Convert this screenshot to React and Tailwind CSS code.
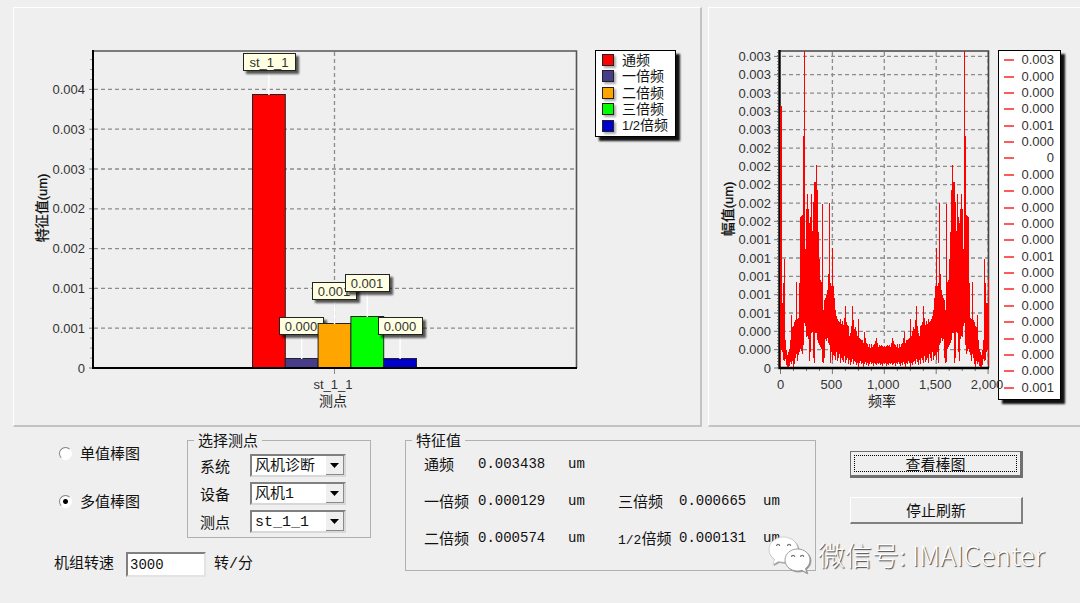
import React, { useState } from "react";

const series = [
  { name: "通频", color: "#ff0000", top: 94, tag: "st_1_1", tagX: 243, tagY: 53, tagW: 52 },
  { name: "一倍频", color: "#483d8b", top: 358, tag: "0.000", tagX: 279, tagY: 317, tagW: 44 },
  { name: "二倍频", color: "#ffa500", top: 323, tag: "0.001", tagX: 312, tagY: 282, tagW: 44 },
  { name: "三倍频", color: "#00ff00", top: 316, tag: "0.001", tagX: 345, tagY: 274, tagW: 44 },
  { name: "1/2倍频", color: "#0000cd", top: 358, tag: "0.000", tagX: 378, tagY: 317, tagW: 44 },
];

const barTicks = ["0", "0.001", "0.001", "0.002", "0.002", "0.003", "0.003", "0.004"];

const spectrumTicks = [
  "0", "0.000", "0.000", "0.001", "0.001", "0.001", "0.001", "0.001", "0.002",
  "0.002", "0.002", "0.002", "0.002", "0.003", "0.003", "0.003", "0.003", "0.003",
];

const spectrumLegend = [
  "0.003", "0.000", "0.000", "0.000", "0.001", "0.000", "0", "0.000", "0.000", "0.000", "0.000",
  "0.000", "0.001", "0.000", "0.000", "0.000", "0.000", "0.000", "0.000", "0.000", "0.001",
];

// First half of the spectrum, one column per pixel; the other half is its mirror
const tops = [
  106, 106, 303, 283, 259, 340, 350, 355, 352, 349, 340, 315, 327, 326, 322, 320, 282, 319, 318, 283,
  217, 216, 215, 136, 51, 249, 209, 194, 209, 223, 217, 194, 231, 202, 182, 182, 165, 190, 232, 259,
  280, 282, 204, 310, 300, 298, 295, 290, 274, 203, 283, 286, 248, 286, 298, 310, 316, 319, 321, 322,
  319, 324, 321, 325, 318, 306, 322, 325, 326, 336, 333, 326, 306, 320, 329, 327, 331, 336, 319, 338,
  339, 340, 340, 343, 332, 338, 343, 344, 347, 344, 348, 344, 347, 345, 344, 341, 338, 343, 347, 345,
  346, 345, 346, 347, 346,
];

const bottoms = [
  366, 350, 352, 360, 361, 359, 365, 367, 367, 366, 362, 364, 361, 367, 364, 358, 354, 361, 355, 352,
  349, 351, 354, 345, 323, 326, 337, 336, 339, 361, 352, 333, 332, 358, 363, 333, 333, 340, 343, 345,
  347, 349, 362, 363, 358, 339, 341, 338, 343, 345, 363, 352, 360, 355, 356, 360, 352, 361, 358, 354,
  363, 358, 360, 362, 356, 363, 360, 358, 364, 360, 365, 362, 359, 364, 361, 362, 365, 363, 367, 363,
  361, 364, 363, 367, 364, 362, 365, 363, 366, 364, 362, 364, 363, 366, 363, 364, 365, 363, 364, 363,
  365, 364, 366, 363, 364,
];

const spectrumPath = tops
  .map(
    (top, i) =>
      `M${780.5 + i} ${top}V${bottoms[i]}M${988.5 - i} ${i === 0 ? 279 : top === 106 ? 303 : top}V${bottoms[i]}`
  )
  .join("");

const readings = [
  [{ label: "通频", value: "0.003438" }],
  [
    { label: "一倍频", value: "0.000129" },
    { label: "三倍频", value: "0.000665" },
  ],
  [
    { label: "二倍频", value: "0.000574" },
    { label: "1/2倍频", value: "0.000131" },
  ],
];

const BarChart = () => (
  <svg
    viewBox="14 8 581 417"
    className="h-[417px] w-[581px] flex-none font-['Liberation_Sans','Noto_Sans_CJK_SC',sans-serif] text-[13px]"
  >
    <defs>
      <filter id="tagShadow" x="-20%" y="-30%" width="150%" height="190%">
        <feDropShadow dx="3" dy="3" stdDeviation="1.2" floodColor="#000" floodOpacity="0.65" />
      </filter>
    </defs>

    {barTicks.map((tick, i) => {
      const y = 368 - i * 39.8;
      return (
        <g key={i}>
          {i > 0 && (
            <line x1="94" x2="576" y1={y} y2={y} stroke="#8c8c8c" strokeWidth="1.3" strokeDasharray="4 3" />
          )}
          <line x1="89" x2="93" y1={y} y2={y} stroke="#777" />
          {[1, 2, 3].map((n) => (
            <line key={n} x1="90" x2="92" y1={y - n * 9.95} y2={y - n * 9.95} stroke="#999" />
          ))}
          <text x="85" y={y + 4.5} textAnchor="end" fill="#333">
            {tick}
          </text>
        </g>
      );
    })}
    <line x1="334.5" x2="334.5" y1="52" y2="368" stroke="#8c8c8c" strokeWidth="1.3" strokeDasharray="4 3" />
    <path d="M93 51H576.5V368" fill="none" stroke="#555" strokeWidth="1.6" />

    {series.map((s, i) => {
      const x = 252.5 + i * 32.8;
      return (
        <g key={s.name}>
          <rect x={x} y={s.top + 0.5} width="32.8" height={367 - s.top} fill={s.color} stroke="#222" />
          <line x1={x + 16.4} x2={x + 16.4} y1={s.tagY + 18} y2={s.top + 1} stroke="#fff" strokeWidth="1.5" />
          <rect
            x={s.tagX + 0.5}
            y={s.tagY + 0.5}
            width={s.tagW}
            height="17"
            fill="#ffffe1"
            stroke="#222"
            filter="url(#tagShadow)"
          />
          <text x={s.tagX + s.tagW / 2} y={s.tagY + 14} textAnchor="middle" fill="#333">
            {s.tag}
          </text>
        </g>
      );
    })}

    <path d="M93 50V368H577" fill="none" stroke="#000" strokeWidth="2" />
    <line x1="334.5" x2="334.5" y1="369" y2="374" stroke="#888" />
    <text x="333" y="389" textAnchor="middle" fill="#333">
      st_1_1
    </text>
    <text x="333" y="406" textAnchor="middle" fill="#222" fontSize="14">
      测点
    </text>
    <text
      transform="translate(47 208) rotate(-90)"
      textAnchor="middle"
      fill="#111"
      stroke="#111"
      strokeWidth=".3"
      fontSize="14"
    >
      特征值<tspan fontSize="13">(um)</tspan>
    </text>
  </svg>
);

const SpectrumChart = () => (
  <svg
    viewBox="709 8 289 417"
    className="relative z-10 h-[417px] w-[289px] flex-none overflow-visible font-['Liberation_Sans','Noto_Sans_CJK_SC',sans-serif] text-[13px]"
  >
    {spectrumTicks.map((tick, i) => {
      const y = 368 - i * 18.33;
      return (
        <g key={i}>
          {i > 0 && (
            <line x1="782" x2="988" y1={y} y2={y} stroke="#8c8c8c" strokeWidth="1.3" strokeDasharray="4 3" />
          )}
          <line x1="774" x2="778" y1={y} y2={y} stroke="#777" />
          <text x="771" y={y + 4.5} textAnchor="end" fill="#333">
            {tick}
          </text>
        </g>
      );
    })}
    {["0", "500", "1,000", "1,500", "2,000"].map((tick, i) => {
      const x = 780.5 + i * 51.9;
      return (
        <g key={tick}>
          {i > 0 && (
            <line x1={x} x2={x} y1="52" y2="368" stroke="#8c8c8c" strokeWidth="1.3" strokeDasharray="4 3" />
          )}
          <line x1={x} x2={x} y1="369" y2="374" stroke="#777" />
          {i < 4 &&
            [1, 2, 3].map((n) => (
              <line key={n} x1={x + n * 13} x2={x + n * 13} y1="369" y2="371" stroke="#777" />
            ))}
          <text x={i === 0 ? x : x - 1} y="389" textAnchor="middle" fill="#333">
            {tick}
          </text>
        </g>
      );
    })}
    <line x1="777.5" x2="777.5" y1="52" y2="368" stroke="#888" strokeDasharray="1 2" />
    <path d="M779 51H988.5V368" fill="none" stroke="#444" strokeWidth="1.6" />
    <path d="M779.5 50V368H989" fill="none" stroke="#000" strokeWidth="2.4" />
    <path d={spectrumPath} stroke="#ff0000" strokeWidth="1" shapeRendering="crispEdges" />
    <text x="882" y="406" textAnchor="middle" fill="#222" fontSize="14">
      频率
    </text>
    <text
      transform="translate(733 209) rotate(-90)"
      textAnchor="middle"
      fill="#111"
      stroke="#111"
      strokeWidth=".3"
      fontSize="14"
    >
      幅值<tspan fontSize="13">(um)</tspan>
    </text>
  </svg>
);

const SelectField = ({ id, label, options }) => (
  <div className="flex items-center">
    <label htmlFor={id} className="w-[50px] leading-4">
      {label}
    </label>
    <div className="relative">
      <select
        id={id}
        className="block h-[23px] w-[96px] appearance-none border-2 border-t-[#808080] border-r-[#d8d8d8] border-b-[#d8d8d8] border-l-[#808080] bg-white pt-[2px] pl-[3px] font-['Liberation_Mono','Noto_Sans_CJK_SC',monospace] leading-[17px] outline-none"
      >
        {options.map((o) => (
          <option key={o}>{o}</option>
        ))}
      </select>
      <span className="pointer-events-none absolute top-[2px] right-[2px] flex h-[19px] w-[18px] items-center justify-center border-r border-b border-[#8a8a8a] bg-[#efefef]">
        <svg viewBox="0 0 9 5" className="h-[5px] w-[9px]">
          <path d="M0 0H9L4.5 5Z" fill="#000" />
        </svg>
      </span>
    </div>
  </div>
);

const WeChatLogo = () => (
  <svg viewBox="0 0 44 38" className="h-[38px] w-[44px] drop-shadow-[1px_1px_0px_#999]">
    <path
      d="M15.5 1C7.500 1 1 6.600 1 13.600c0 4 2.100 7.400 5.400 9.700L5 28.500l5.600-3c1.600.500 3.200.700 4.900.700 8 0 14.500-5.600 14.500-12.600S23.500 1 15.500 1Z"
      fill="#fff"
      stroke="#bbb"
      strokeWidth=".6"
    />
    <path
      d="M29.500 13C22.500 13 17 17.900 17 24s5.500 11 12.500 11c1.600 0 3.100-.300 4.500-.700l4.800 2.700-1.300-4.500C40.300 30.500 42 27.400 42 24c0-6.100-5.500-11-12.500-11Z"
      fill="#fff"
      stroke="#888"
      strokeWidth=".8"
    />
    <path
      d="M8.500 10a1.600 1.600 0 0 1 3.200 0M19.500 10a1.600 1.600 0 0 1 3.200 0M23.500 21a1.600 1.600 0 0 1 3.200 0M32.500 21a1.600 1.600 0 0 1 3.200 0"
      fill="none"
      stroke="#777"
      strokeWidth="1.200"
    />
  </svg>
);

const App = () => {
  const [mode, setMode] = useState("multi");
  const [speed, setSpeed] = useState("3000");

  return (
    <div className="min-h-screen overflow-hidden bg-[#efefef] pt-[7px] font-['Noto_Sans_CJK_SC',sans-serif] text-[15px] leading-5 text-[#111]">
      {/* Charts */}
      <div className="flex gap-[6px] pl-[13px]">
        <section className="flex shrink-0 grow basis-[689px] items-start border-t border-r-2 border-b-2 border-l border-t-white border-r-[#c3c3c3] border-b-[#c3c3c3] border-l-white">
          <BarChart />
          <ul className="mt-[42px] flex h-[87px] w-[81px] flex-col border border-black bg-white pt-px pb-[2px] pl-[6px] font-['Liberation_Sans','Noto_Sans_CJK_SC',sans-serif] text-[14px] shadow-[4px_4px_2px_#111]">
            {series.map((s) => (
              <li key={s.name} className="flex flex-1 items-center gap-2 leading-4">
                <svg viewBox="0 0 12 12" className="size-3 flex-none drop-shadow-[2px_2px_1px_#aaa]">
                  <rect x=".5" y=".5" width="11" height="11" fill={s.color} stroke="#222" />
                </svg>
                <span className="whitespace-nowrap">
                  {s.name.startsWith("1/2") ? (
                    <>
                      <span className="text-[13px]">1/2</span>倍频
                    </>
                  ) : (
                    s.name
                  )}
                </span>
              </li>
            ))}
          </ul>
        </section>

        <section className="flex shrink-0 grow basis-[372px] items-start border-t border-b-2 border-l border-t-white border-b-[#c3c3c3] border-l-white">
          <SpectrumChart />
          <ul className="mt-[42px] flex h-[350px] w-[63px] flex-col border border-black bg-white pt-px pr-[6px] pb-[3px] pl-[5px] font-['Liberation_Sans',sans-serif] text-[13px] text-[#333] shadow-[4px_4px_2px_#111]">
            {spectrumLegend.map((value, i) => (
              <li key={i} className="flex flex-1 items-center justify-between leading-4">
                <svg viewBox="0 0 10 2" className="h-[2px] w-[10px] flex-none">
                  <path d="M0 1H10" stroke="#ff0000" strokeWidth="1.3" />
                </svg>
                {value}
              </li>
            ))}
          </ul>
        </section>
      </div>

      {/* Controls */}
      <div className="relative flex items-start pl-[54px]">
        <div className="w-[317px] flex-none">
          <div className="flex items-start">
            <div className="flex w-[133px] flex-col gap-7 pt-4 pl-[5px]">
              {[
                { id: "single", label: "单值棒图" },
                { id: "multi", label: "多值棒图" },
              ].map((m) => (
                <label key={m.id} className="flex items-center gap-2">
                  <input
                    type="radio"
                    name="mode"
                    checked={mode === m.id}
                    onChange={() => setMode(m.id)}
                    className="size-[13px] appearance-none rounded-full border border-t-[#808080] border-r-white border-b-white border-l-[#808080] bg-white checked:bg-[radial-gradient(circle,#000_2px,#fff_3px)]"
                  />
                  {m.label}
                </label>
              ))}
            </div>
            <fieldset className="mt-[5px] flex-1 border border-[#b0b0b0] pb-1 pl-3">
              <legend className="-ml-[6px] px-1 leading-4">选择测点</legend>
              <div className="flex flex-col gap-[5px] pt-[6px]">
                <SelectField id="system" label="系统" options={["风机诊断"]} />
                <SelectField id="device" label="设备" options={["风机1"]} />
                <SelectField id="point" label="测点" options={["st_1_1"]} />
              </div>
            </fieldset>
          </div>
          <div className="mt-[14px] flex items-center font-['Liberation_Mono','Noto_Sans_CJK_SC',monospace]">
            <label htmlFor="speed" className="w-[72px]">
              机组转速
            </label>
            <input
              id="speed"
              type="text"
              value={speed}
              onChange={(e) => setSpeed(e.target.value)}
              className="mr-2 h-[25px] w-[80px] border-2 border-t-[#808080] border-r-[#e3e3e3] border-b-[#e3e3e3] border-l-[#808080] bg-white pl-[2px] text-[14px] outline-none"
            />
            <span>转/分</span>
          </div>
        </div>

        <fieldset className="mt-[5px] ml-[34px] h-[139px] w-[411px] flex-none border border-[#b0b0b0] pl-[18px]">
          <legend className="-ml-[12px] px-1 leading-4">特征值</legend>
          <div className="flex flex-col gap-[17px] pt-[6px]">
            {readings.map((row, i) => (
              <div key={i} className="flex items-start">
                {row.map((r, n) => (
                  <div key={r.label} className="flex items-start font-['Liberation_Mono',monospace] text-[14px]">
                    <span
                      className={
                        n === 0
                          ? "w-[54px] font-['Noto_Sans_CJK_SC',sans-serif] text-[15px]"
                          : "w-[61px] font-['Noto_Sans_CJK_SC',sans-serif] text-[15px]"
                      }
                    >
                      {r.label.startsWith("1/2") ? (
                        <>
                          <span className="font-['Liberation_Mono',monospace] text-[13px] leading-4">1/2</span>
                          倍频
                        </>
                      ) : (
                        r.label
                      )}
                    </span>
                    <span className={n === 0 ? "w-[90px]" : "w-[84px]"}>{r.value}</span>
                    <span className="w-[50px]">um</span>
                  </div>
                ))}
              </div>
            ))}
          </div>
        </fieldset>

        <div className="mt-6 ml-[34px] flex w-[173px] flex-none flex-col gap-[19px]">
          <button
            type="button"
            className="h-[27px] border border-r-[3px] border-b-[3px] border-[#707070] bg-[#efefef] p-[3px]"
          >
            <span className="flex h-full items-center justify-center border border-dotted border-black leading-4">
              查看棒图
            </span>
          </button>
          <button
            type="button"
            className="h-[27px] border border-r-2 border-b-2 border-t-white border-r-[#808080] border-b-[#808080] border-l-white bg-[#efefef] leading-4"
          >
            停止刷新
          </button>
        </div>

        {/* Watermark */}
        <div className="absolute top-[108px] left-[768px] flex items-center gap-[6px] text-[27px] leading-[40px] font-light whitespace-nowrap text-white [text-shadow:1px_1px_1px_#444]">
          <WeChatLogo />
          微信号: IMAICenter
        </div>
      </div>
    </div>
  );
};

export default App;
